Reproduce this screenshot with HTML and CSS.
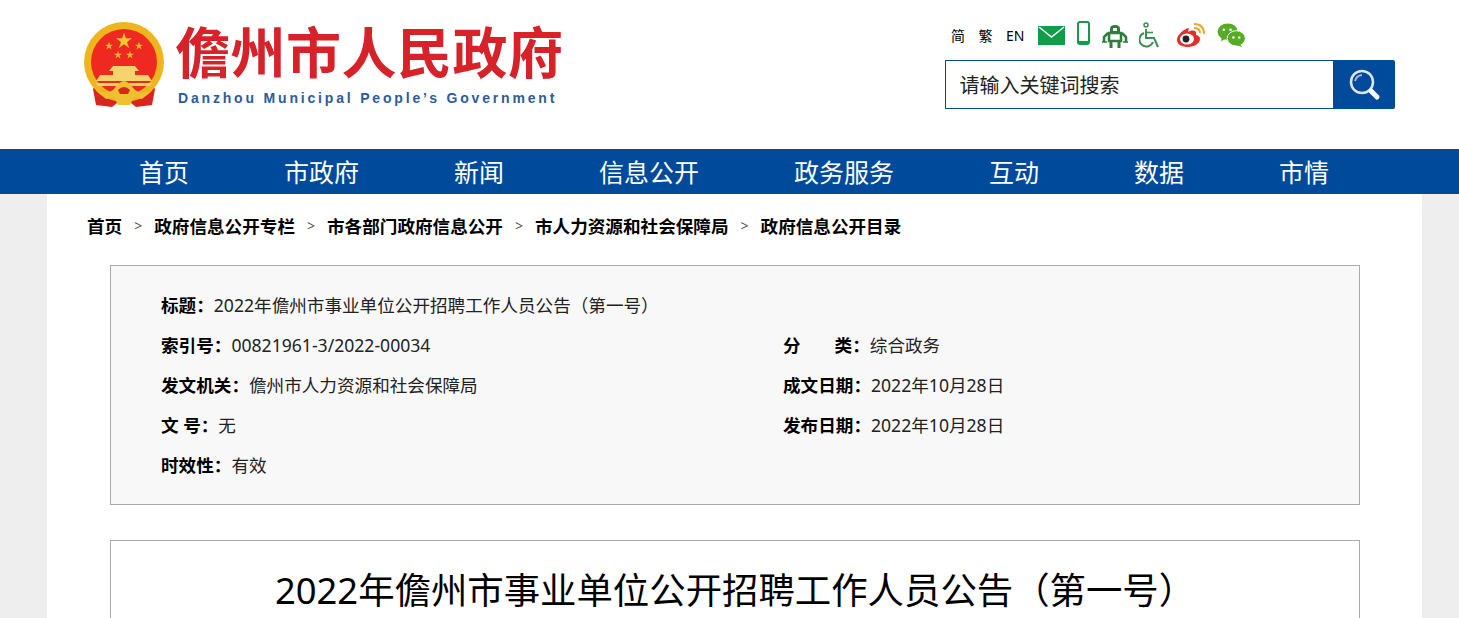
FILE: index.html
```html
<!DOCTYPE html>
<html lang="zh-CN">
   <head>
      <meta charset="UTF-8" />
      <title>2022年儋州市事业单位公开招聘工作人员公告（第一号）</title>
      <link rel="stylesheet" href="styles.css">
   </head>
   <body>
      <header class="top">
         <div class="logo">
            <svg class="emblem" width="84" height="88" viewBox="0 0 84 88">
               <defs>
                  <polygon id="star" points="0,-10 2.2,-3.1 9.5,-3.1 3.6,1.2 5.9,8.1 0,3.8 -5.9,8.1 -3.6,1.2 -9.5,-3.1 -2.2,-3.1"/>
               </defs>
               <path d="M17 60 L11 68 L14 84 L30 86 L40 78 Z" fill="#d8261f"/>
               <path d="M67 60 L73 68 L70 84 L54 86 L44 78 Z" fill="#d8261f"/>
               <circle cx="42" cy="41" r="40" fill="#efb51f"/>
               <circle cx="42" cy="41" r="33" fill="#ee2a20"/>
               <use href="#star" fill="#f7c82c" transform="translate(42 20) scale(.85)"/>
               <use href="#star" fill="#e9bb3a" transform="translate(27 25) scale(.42)"/>
               <use href="#star" fill="#e9bb3a" transform="translate(57 25) scale(.42)"/>
               <use href="#star" fill="#e9bb3a" transform="translate(36 34) scale(.42)"/>
               <use href="#star" fill="#e9bb3a" transform="translate(48 34) scale(.42)"/>
               <path d="M31 45 H53 L57 50 H53 V54 H66 L70 60 H14 L18 54 H31 V50 H27 Z" fill="#f7d36b"/>
               <path d="M14 62 H70 L68 65 H16 Z" fill="#f7d36b"/>
               <path d="M14 70 Q26 74 32 68 Q38 60 42 60 Q46 60 52 68 Q58 74 70 70 L60 78 L52 76 L48 84 H36 L32 76 L24 78 Z" fill="#efc02f"/>
               <path d="M36 69 Q42 63 48 69 L46 73 H38 Z" fill="#d8261f"/>
            </svg>
            <div class="logo-text">
               <div class="logo-cn">儋州市人民政府</div>
               <div class="logo-en">Danzhou Municipal People’s Government</div>
            </div>
         </div>
         <div class="tools">
            <div class="links">
               <a class="lang">简</a>
               <a class="lang">繁</a>
               <a class="lang en">EN</a>
               <svg class="mail" width="27" height="19" viewBox="0 0 27 19">
                  <rect width="27" height="19" fill="#0f9d48"/>
                  <path d="M1 1 L13.5 11 L26 1" fill="none" stroke="#fff" stroke-width="1.5"/>
               </svg>
               <svg class="phone" width="13" height="24" viewBox="0 0 13 24">
                  <rect x="1" y="1" width="11" height="22" rx="2" fill="#fff" stroke="#16994a" stroke-width="2"/>
                  <rect x="1" y="20" width="11" height="3" fill="#16994a"/>
               </svg>
               <svg class="robot" width="26" height="23" viewBox="0 0 26 23">
                  <path d="M8 7 V4 Q8 0 13 0 Q18 0 18 4 V7 Z" fill="#2e7d3c"/>
                  <rect x="11" y="3" width="4" height="3" fill="#fff"/>
                  <rect x="7" y="8" width="12" height="8" fill="none" stroke="#2e7d3c" stroke-width="2.5"/>
                  <path d="M6 8 L2 12 V17 M20 8 L24 12 V17" fill="none" stroke="#2e7d3c" stroke-width="2.5"/>
                  <path d="M0 17 H5 M21 17 H26" stroke="#2e7d3c" stroke-width="1.5"/>
                  <path d="M9 16 V23 M17 16 V23" stroke="#2e7d3c" stroke-width="3"/>
               </svg>
               <svg class="wheel" width="22" height="26" viewBox="0 0 22 26">
                  <circle cx="7" cy="3" r="2" fill="none" stroke="#3c8f54" stroke-width="1.5"/>
                  <path d="M7 7 V16 H15 L19 25" fill="none" stroke="#3c8f54" stroke-width="2"/>
                  <path d="M7 10.5 H14" stroke="#3c8f54" stroke-width="1.6"/>
                  <path d="M5 11 A7 7 0 1 0 14 20" fill="none" stroke="#3c8f54" stroke-width="2"/>
               </svg>
               <svg class="weibo" width="30" height="25" viewBox="0 0 30 25">
                  <path d="M12 5 C5 8 1 13 1 17 C1 22 7 24 12 24 C19 24 24 20 24 16 C24 13 21 12 20 12 C21 8 18 6 12 9 C13 6 13 5 12 5 Z" fill="#e0302c"/>
                  <ellipse cx="11" cy="16" rx="7" ry="5.5" fill="#fff"/>
                  <circle cx="10" cy="16" r="3.4" fill="#222"/>
                  <path d="M18 1 Q28 1 28 11 M18 5 Q24 5 24 10" fill="none" stroke="#f2a32b" stroke-width="2"/>
               </svg>
               <svg class="wechat" width="29" height="24" viewBox="0 0 30 25">
                  <ellipse cx="11" cy="9" rx="10.5" ry="8.5" fill="#55ad22"/>
                  <path d="M5 14 L4 19 L10 16 Z" fill="#55ad22"/>
                  <ellipse cx="20" cy="16" rx="9.5" ry="8" fill="#55ad22" stroke="#fff"/>
                  <path d="M24 22 L26 25 L20 23 Z" fill="#55ad22"/>
                  <circle cx="7" cy="7" r="1.4" fill="#fff"/><circle cx="14" cy="7" r="1.4" fill="#fff"/>
                  <circle cx="17" cy="15" r="1.3" fill="#fff"/><circle cx="23" cy="15" r="1.3" fill="#fff"/>
               </svg>
            </div>
            <form class="search">
               <div class="search-input">请输入关键词搜索</div>
               <div class="search-btn">
                  <svg width="34" height="34" viewBox="0 0 34 34">
                     <circle cx="15" cy="14" r="11" fill="none" stroke="#dfe7f2" stroke-width="2.5"/>
                     <path d="M8 13 A8 8 0 0 1 15 7" fill="none" stroke="#9fb8d9" stroke-width="2"/>
                     <path d="M24 23 L30 29" stroke="#fff" stroke-width="5" stroke-linecap="round"/>
                  </svg>
               </div>
            </form>
         </div>
      </header>
      <nav class="nav">
         <a>首页</a>
         <a>市政府</a>
         <a>新闻</a>
         <a>信息公开</a>
         <a>政务服务</a>
         <a>互动</a>
         <a>数据</a>
         <a>市情</a>
      </nav>
      <main class="wrap">
         <div class="crumbs">
            <a>首页</a><span>&gt;</span>
            <a>政府信息公开专栏</a><span>&gt;</span>
            <a>市各部门政府信息公开</a><span>&gt;</span>
            <a>市人力资源和社会保障局</a><span>&gt;</span>
            <a>政府信息公开目录</a>
         </div>
         <section class="meta">
            <div class="meta-row full"><b>标题：</b>2022年儋州市事业单位公开招聘工作人员公告（第一号）</div>
            <div class="meta-row"><b>索引号：</b>00821961-3/2022-00034</div>
            <div class="meta-row"><b class="spread">分<i></i>类：</b>综合政务</div>
            <div class="meta-row"><b>发文机关：</b>儋州市人力资源和社会保障局</div>
            <div class="meta-row"><b>成文日期：</b>2022年10月28日</div>
            <div class="meta-row"><b>文&nbsp;号：</b>无</div>
            <div class="meta-row"><b>发布日期：</b>2022年10月28日</div>
            <div class="meta-row full"><b>时效性：</b>有效</div>
         </section>
         <article class="article">
            <h1>2022年儋州市事业单位公开招聘工作人员公告（第一号）</h1>
         </article>
      </main>
   </body>
</html>
```

FILE: styles.css
```css
html, body {
height: 618px;
overflow: hidden;
}
body {
margin: 0;
background: #eeeeee;
color: #000;
font-family: "Noto Sans", "Noto Sans CJK SC", sans-serif;
}
.top {
height: 149px;
background: #fff;
display: flex;
justify-content: space-between;
padding: 0 64px 0 82px;
box-sizing: border-box;
}
.logo {
display: flex;
gap: 9px;
padding-top: 21px;
}
.logo-cn {
font-family: "Noto Sans CJK SC", sans-serif;
font-weight: 700;
font-size: 55px;
line-height: 62px;
letter-spacing: 0.5px;
color: #d7222a;
white-space: nowrap;
margin-top: -3px;
}
.logo-en {
font-family: "Liberation Sans", sans-serif;
font-weight: 700;
font-size: 14px;
line-height: 16px;
letter-spacing: 2.82px;
color: #2c5c9c;
margin: 10px 0 0 3px;
white-space: nowrap;
}
.tools {
width: 450px;
padding-top: 20px;
}
.links {
height: 30px;
display: flex;
align-items: center;
padding-left: 6px;
}
.lang {
font-size: 14px;
margin-right: 13.5px;
}
.lang.en {
margin-right: 13.5px;
}
.mail { margin-right: 12px; margin-top: 1px; }
.phone { margin-right: 12px; margin-top: -5px; }
.robot { margin-right: 11px; margin-top: 2px; }
.wheel { margin-right: 15px; }
.weibo { margin-right: 11px; }
.search {
display: flex;
height: 49px;
margin-top: 10px;
}
.search-input {
flex: 1;
box-sizing: border-box;
border: 1px solid #004a9c;
border-right: none;
padding-left: 13.5px;
font-size: 20px;
line-height: 49px;
color: #222;
}
.search-btn {
width: 62px;
background: #004a9c;
border-radius: 0 2px 2px 0;
display: flex;
align-items: center;
justify-content: center;
}
.nav {
height: 45px;
background: #004a9c;
display: flex;
padding-left: 139px;
}
.nav a {
color: #fff;
font-size: 25px;
line-height: 46px;
margin-right: 95px;
white-space: nowrap;
}
.wrap {
width: 1375px;
margin-left: 47px;
height: 424px;
background: #fff;
padding: 0 62px 0 63px;
box-sizing: border-box;
}
.crumbs {
height: 71px;
display: flex;
align-items: flex-start;
margin-left: -23px;
padding-top: 21px;
box-sizing: border-box;
font-size: 17.6px;
line-height: 22px;
font-weight: 700;
}
.crumbs span {
font-weight: 400;
font-size: 14px;
color: #555;
margin: 0 12px;
}
.meta {
height: 240px;
box-sizing: border-box;
border: 1px solid #aaaaaa;
background: #f8f8f8;
padding: 20px 0 0 50px;
display: grid;
grid-template-columns: 622px 1fr;
grid-auto-rows: 40px;
font-size: 17.6px;
line-height: 39px;
color: #222;
}
.meta b {
color: #000;
}
.meta-row.full {
grid-column: 1 / 3;
}
.spread i {
display: inline-block;
width: 34px;
}
.article {
margin-top: 35px;
height: 200px;
border: 1px solid #aaaaaa;
box-sizing: border-box;
}
.article h1 {
margin: 25px 0 0;
text-align: center;
font-weight: 400;
font-size: 36.4px;
line-height: 48px;
}
```
